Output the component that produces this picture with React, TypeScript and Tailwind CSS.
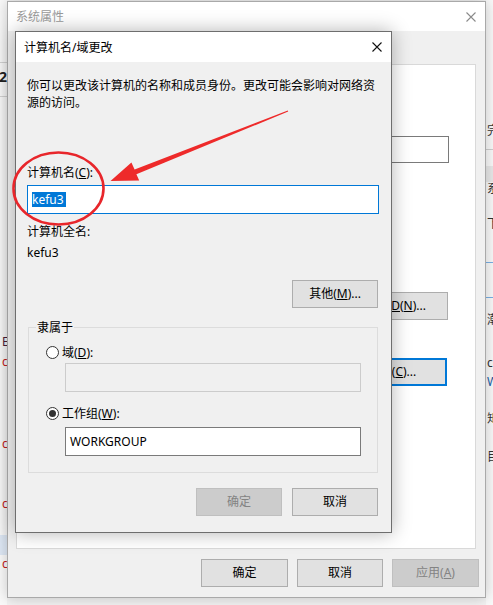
import React from "react";

const sans = "font-['Noto_Sans','Noto_Sans_CJK_SC',sans-serif]";

const CloseIcon = ({ color }: { color: string }) => (
    <svg width="10" height="10" viewBox="0 0 10 10">
        <path d="M0.5 0.5 L9.5 9.5 M9.5 0.5 L0.5 9.5" stroke={color} strokeWidth="1.1" fill="none" />
    </svg>
);

const Btn = ({
    children,
    disabled,
    focused,
    className = ""
}: {
    children: React.ReactNode;
    disabled?: boolean;
    focused?: boolean;
    className?: string;
}) => {
    let look = "border border-[#adadad] bg-[#e1e1e1] text-black";
    if (disabled) look = "border border-[#bfbfbf] bg-[#cccccc] text-[#838383]";
    if (focused) look = "border-2 border-[#0078d7] bg-[#e1e1e1] text-black";
    return (
        <div className={`h-[28px] flex items-center justify-center shrink-0 leading-none ${look} ${className}`}>
            {children}
        </div>
    );
};

const Radio = ({ checked }: { checked?: boolean }) => (
    <div className="w-[13px] h-[13px] rounded-full border border-[#333] bg-white flex items-center justify-center shrink-0">
        {checked && <div className="w-[7px] h-[7px] rounded-full bg-[#333]" />}
    </div>
);

// Bits of the windows stacked further back, peeking out at the edges
const BackWindows = () => (
    <>
        <div className="absolute left-0 top-0 w-[7px] h-[605px] overflow-hidden bg-[#fafafa]">
            <div className="absolute left-0 top-[62px] w-[7px] h-px bg-[#d4d4d4]" />
            <span className="absolute left-[-1px] top-[68px] text-[14px] font-bold leading-[18px] text-[#222]">2</span>
            <div className="absolute left-0 top-[96px] w-[7px] h-px bg-[#d4d4d4]" />
            <span className="absolute left-[2px] top-[334px] text-[12px] leading-[16px] text-[#4b1f3a]">E</span>
            <span className="absolute left-[2px] top-[354px] text-[12px] leading-[16px] text-[#c42020]">c</span>
            <span className="absolute left-[2px] top-[436px] text-[12px] leading-[16px] text-[#c42020]">c</span>
            <span className="absolute left-[2px] top-[496px] text-[12px] leading-[16px] text-[#c42020]">c</span>
            <div className="absolute left-0 top-[535px] w-[7px] h-[20px] bg-[#dfe9f6]" />
            <span className="absolute left-[2px] top-[556px] text-[12px] leading-[16px] text-[#c42020]">c</span>
        </div>
        <div className="absolute left-[486px] top-0 w-[7px] h-[605px] overflow-hidden bg-[#fafafa] text-[12px] leading-[16px] text-[#333]">
            <span className="absolute left-[1px] top-[123px]">完</span>
            <div className="absolute left-0 top-[149px] w-[7px] h-px bg-[#cfcfcf]" />
            <div className="absolute left-0 top-[166px] w-[7px] h-[16px] bg-[#e9e9e9]" />
            <span className="absolute left-[1px] top-[181px]">系</span>
            <span className="absolute left-[1px] top-[216px]">下</span>
            <div className="absolute left-0 top-[262px] w-[7px] h-px bg-[#79b0e6]" />
            <div className="absolute left-0 top-[297px] w-[7px] h-px bg-[#79b0e6]" />
            <span className="absolute left-[1px] top-[312px]">潮</span>
            <span className="absolute left-[1px] top-[355px]">ce</span>
            <span className="absolute left-[1px] top-[374px] text-[#1d5fa8]">W</span>
            <span className="absolute left-[1px] top-[411px]">矩</span>
            <span className="absolute left-[1px] top-[449px]">目</span>
        </div>
    </>
);

const SystemProperties = () => (
    <div className="absolute left-[7px] top-[1px] w-[479px] h-[597px] border border-[#a9a9a9] bg-[#f0f0f0] flex flex-col shadow-[0_0_14px_rgba(0,0,0,0.22)]">
        <div className="h-[29px] bg-white flex items-center justify-between pl-[8px] pr-[9px] shrink-0">
            <span className="text-[#9a9a9a] leading-[17px]">系统属性</span>
            <CloseIcon color="#8a8a8a" />
        </div>
        {/* tab strip sits under the child dialog */}
        <div className="h-[33px] shrink-0" />
        <div className="ml-[8px] mr-[9px] h-[485px] bg-white border border-[#d9d9d9] flex flex-col items-end pr-[26px] shrink-0">
            <div className="mt-[71px] w-[250px] h-[27px] border border-[#7a7a7a] bg-white" />
            <Btn className="mt-[129px] w-[110px] mr-[1px]">
                网络 I<span className="underline">D</span>(<span className="underline">N</span>)...
            </Btn>
            <Btn focused className="mt-[38px] w-[110px] mr-[2px]">
                更改(<span className="underline">C</span>)...
            </Btn>
        </div>
        <div className="mt-[10px] flex justify-end gap-[9px] pr-[6px]">
            <Btn className="w-[87px]">确定</Btn>
            <Btn className="w-[86px]">取消</Btn>
            <Btn disabled className="w-[87px]">
                应用(<span className="underline">A</span>)
            </Btn>
        </div>
    </div>
);

const ComputerNameDialog = () => (
    <div className="absolute left-[15px] top-[31px] w-[377px] h-[502px] border border-[#6e6e6e] bg-[#f0f0f0] flex flex-col shadow-[0_0_18px_rgba(0,0,0,0.3)]">
        {/* Title bar */}
        <div className="h-[30px] bg-white flex items-center justify-between pl-[8px] pr-[9px] shrink-0">
            <span className="leading-[17px]">计算机名/域更改</span>
            <CloseIcon color="#111" />
        </div>

        {/* Body */}
        <div className="flex-1 flex flex-col pl-[11px] pr-[12px] pt-[15px] leading-[17px]">
            <p className="w-[351px]">你可以更改该计算机的名称和成员身份。更改可能会影响对网络资源的访问。</p>

            <div className="mt-[53px]">
                计算机名(<span className="underline">C</span>):
            </div>
            <div className="mt-[4px] h-[29px] border border-[#0078d7] bg-white pl-[4px] flex items-center">
                <span className="bg-[#0078d7] text-white leading-[15px] pr-[2px]">kefu3</span>
            </div>

            <div className="mt-[9px]">计算机全名:</div>
            <div className="mt-[4px]">kefu3</div>

            <Btn className="self-end w-[86px] mt-[19px] mr-[1px]">
                其他(<span className="underline">M</span>)...
            </Btn>

            {/* Member of */}
            <div className="relative mt-[19px] ml-[1px] mr-[1px] h-[146px] border border-[#dcdcdc] pl-[17px] pt-[16px] flex flex-col">
                <span className="absolute left-[7px] top-[-9px] px-[1px] bg-[#f0f0f0]">隶属于</span>
                <div className="flex items-center gap-[3px] h-[17px]">
                    <Radio />
                    <span>
                        域(<span className="underline">D</span>):
                    </span>
                </div>
                <div className="mt-[2px] ml-[19px] w-[296px] h-[29px] border border-[#cccccc] bg-[#f0f0f0]" />
                <div className="mt-[13px] flex items-center gap-[3px] h-[17px]">
                    <Radio checked />
                    <span>
                        工作组(<span className="underline">W</span>):
                    </span>
                </div>
                <div className="mt-[5px] ml-[19px] w-[296px] h-[29px] border border-[#7a7a7a] bg-white pl-[4px] flex items-center">
                    WORKGROUP
                </div>
            </div>

            <div className="mt-[15px] flex justify-end gap-[10px] pr-[1px]">
                <Btn disabled className="w-[86px]">确定</Btn>
                <Btn className="w-[86px]">取消</Btn>
            </div>
        </div>
    </div>
);

// Red circle and arrow drawn over the dialog
const Markup = () => (
    <svg className="absolute left-0 top-0 pointer-events-none" width="493" height="605" viewBox="0 0 493 605">
        <ellipse cx="58.5" cy="188.5" rx="45" ry="36" fill="none" stroke="#e8262b" strokeWidth="2.6" />
        <polygon
            points="288.2,111.5 136.4,174.2 139.2,180.6 110.5,181 131.4,162.6 134.6,169.4 287.8,110.5"
            fill="#ee2a2a"
        />
    </svg>
);

export default function App() {
    return (
        <div className={`relative w-[493px] h-[605px] overflow-hidden bg-[#f3f3f3] text-[12px] text-black ${sans}`}>
            <BackWindows />
            <SystemProperties />
            <ComputerNameDialog />
            <Markup />
        </div>
    );
}
